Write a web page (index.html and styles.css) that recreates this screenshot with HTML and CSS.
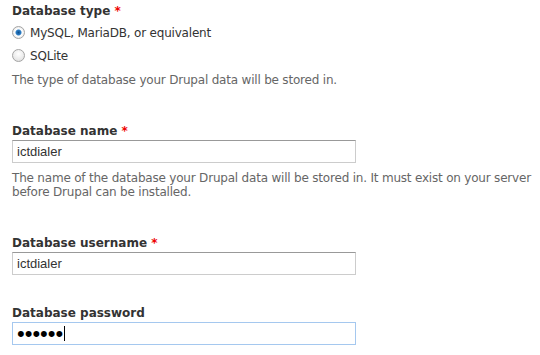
FILE: index.html
```html
<!DOCTYPE html>
<html lang="en">
<head>
    <meta charset="UTF-8">
    <title>Database configuration</title>
    <link rel="stylesheet" href="styles.css">
</head>
<body>
    <form class="install-form">
        <div class="form-item form-type-radios">
            <label class="form-label">Database type <span class="required">*</span></label>
            <div class="radio-option">
                <input type="radio" name="driver" id="driver-mysql" checked>
                <label for="driver-mysql">MySQL, MariaDB, or equivalent</label>
            </div>
            <div class="radio-option">
                <input type="radio" name="driver" id="driver-sqlite">
                <label for="driver-sqlite">SQLite</label>
            </div>
            <div class="description">The type of database your Drupal data will be stored in.</div>
        </div>

        <div class="form-item">
            <label class="form-label" for="db-name">Database name <span class="required">*</span></label>
            <input type="text" class="form-text" id="db-name" value="ictdialer">
            <div class="description">The name of the database your Drupal data will be stored in. It must exist on your server before Drupal can be installed.</div>
        </div>

        <div class="form-item no-description">
            <label class="form-label" for="db-user">Database username <span class="required">*</span></label>
            <input type="text" class="form-text" id="db-user" value="ictdialer">
        </div>

        <div class="form-item no-description">
            <label class="form-label">Database password</label>
            <div class="form-text focused"><span class="dots">&#8226;&#8226;&#8226;&#8226;&#8226;&#8226;</span><span class="caret"></span></div>
        </div>
    </form>
</body>
</html>
```

FILE: styles.css
```css
body {
    margin: 0;
    padding: 2px 12px 0;
    background: #fff;
    color: #333;
    font-family: "DejaVu Sans", Verdana, sans-serif;
    font-size: 13px;
}

.install-form {
    width: 526px;
}

.form-item {
    margin-bottom: 35px;
}

.form-item.no-description {
    margin-bottom: 29px;
}

.form-item:last-child {
    margin-bottom: 0;
}

.form-label {
    display: block;
    font-weight: bold;
    font-size: 12px;
    line-height: 18px;
    color: #333;
}

.required {
    color: #e00;
}

.radio-option {
    display: flex;
    align-items: center;
    gap: 5px;
    height: 23px;
    font-size: 12px;
    letter-spacing: -0.2px;
}

.form-type-radios .form-label {
    margin-bottom: 1px;
}

.radio-option input {
    appearance: none;
    margin: 0;
    width: 13px;
    height: 13px;
    border: 1px solid #a4a4a4;
    border-radius: 50%;
    box-sizing: border-box;
    background: radial-gradient(circle at 50% 35%, #fff 0%, #ececec 55%, #d8d8d8 100%);
}

.radio-option input:checked {
    background: radial-gradient(circle, #0b4f8f 0, #2f7fc6 2.5px, #fff 3.5px, #e8e8e8 6px);
}

.description {
    margin-top: 8px;
    font-size: 12px;
    line-height: 14px;
    letter-spacing: -0.2px;
    color: #666;
}

.form-type-radios .description {
    margin-top: 6px;
}

.form-text {
    display: block;
    width: 344px;
    height: 23px;
    box-sizing: border-box;
    margin: 0;
    padding: 0 4px;
    border: 1px solid #ccc;
    border-top-color: #999;
    font-family: "Liberation Sans", Arial, sans-serif;
    font-size: 13px;
    color: #333;
    background: #fff;
    outline: none;
}

.form-text.focused {
    display: flex;
    align-items: center;
    border-color: #a5c8ef;
}

.dots {
    font-size: 22px;
    color: #000;
}

.caret {
    width: 1px;
    height: 15px;
    margin-left: 1px;
    background: #000;
}
```
